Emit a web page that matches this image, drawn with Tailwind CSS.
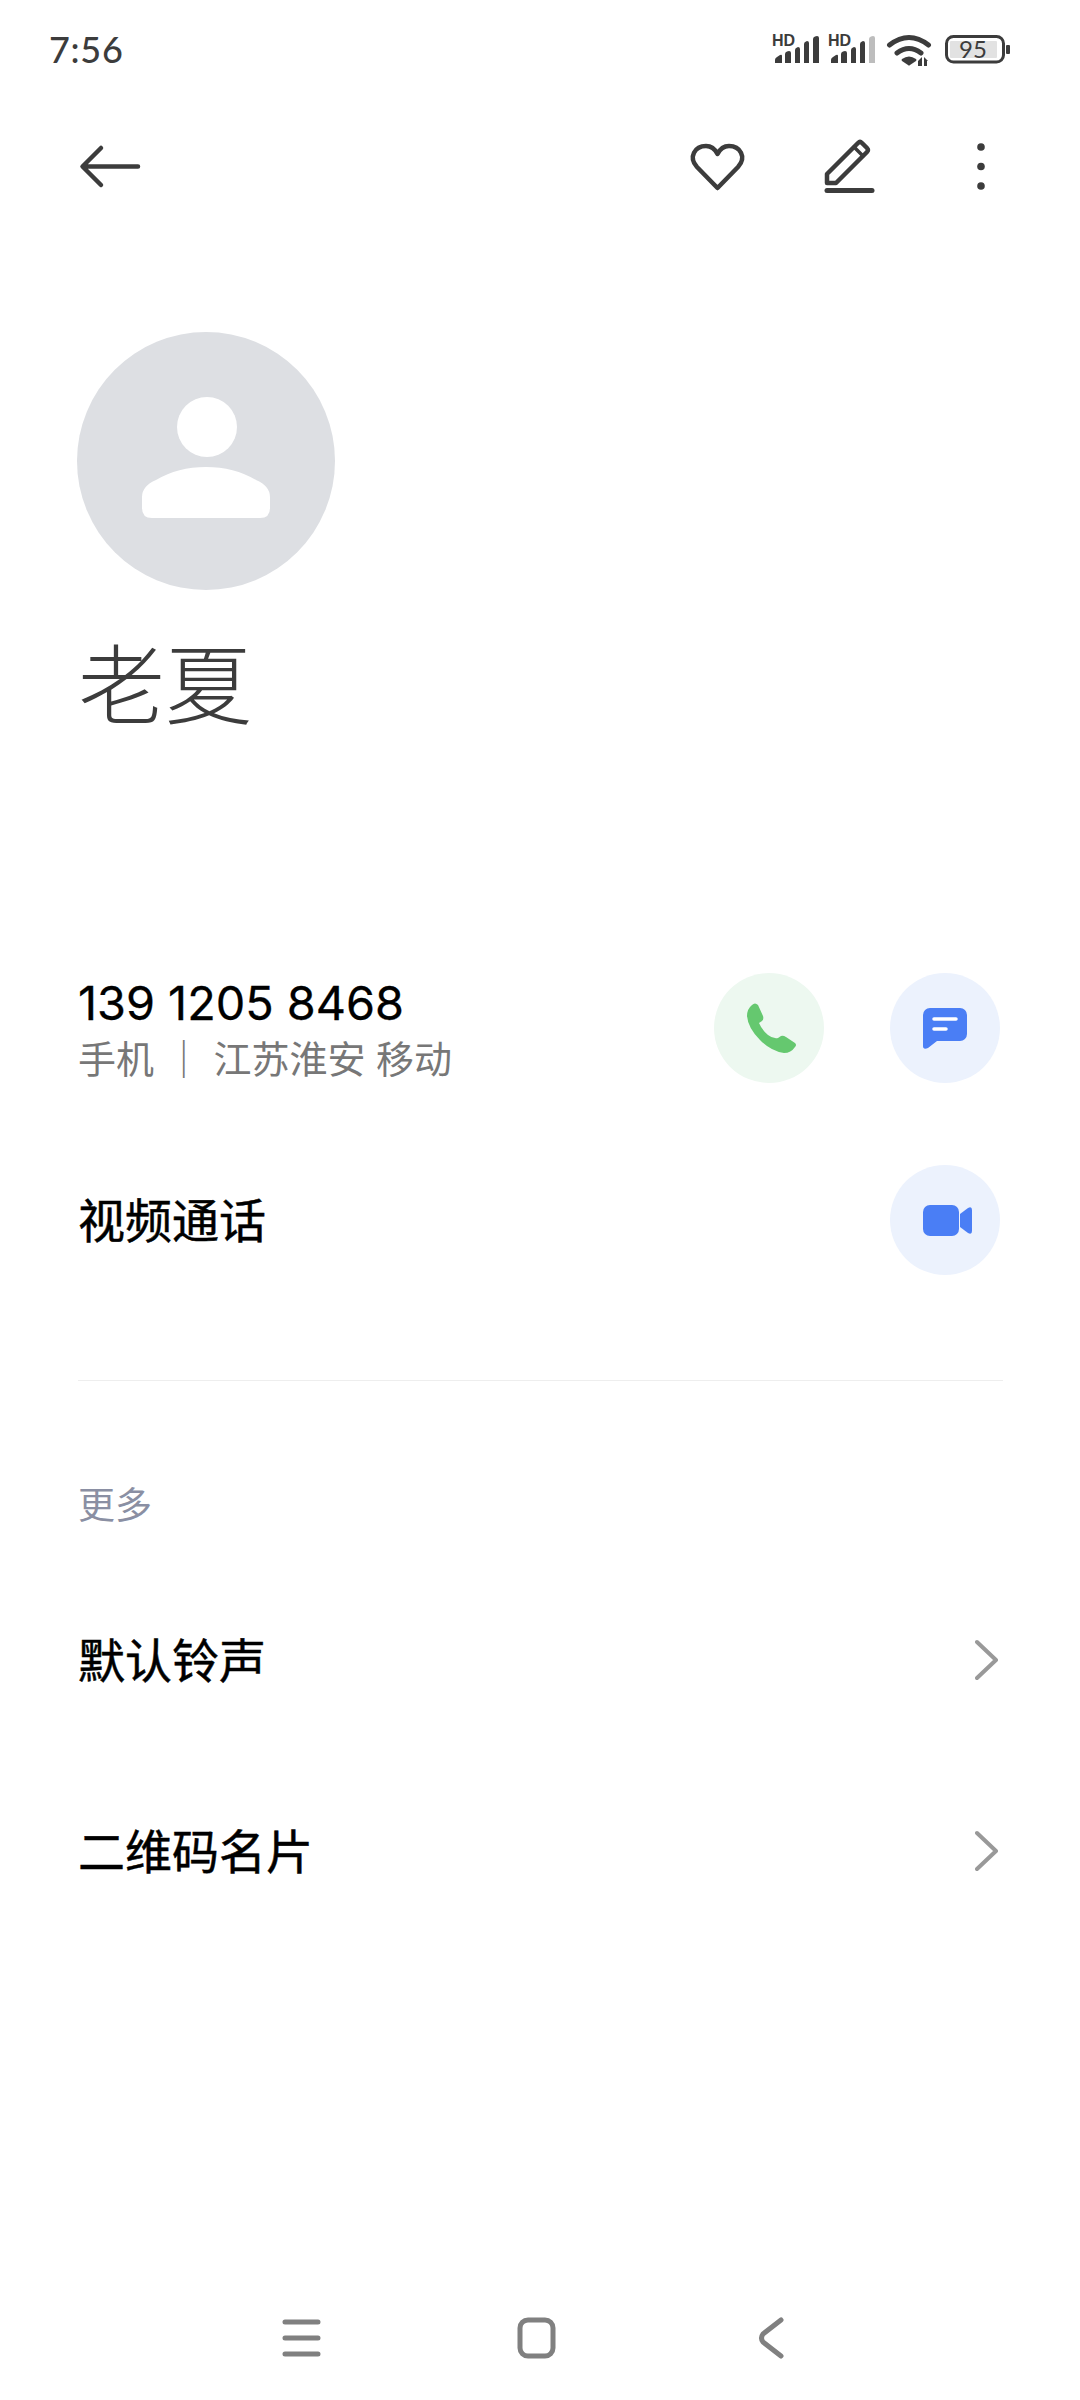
<!DOCTYPE html>
<html lang="zh-CN">
<head>
<meta charset="utf-8">
<script src="https://cdn.jsdelivr.net/npm/@tailwindcss/browser@4"></script>
</head>
<body class="bg-white">
<div class="w-[1080px] h-[2400px] bg-white flex flex-col font-['Inter','Noto_Sans_CJK_SC',sans-serif] text-black overflow-hidden">
  <!-- status bar -->
  <div class="h-[100px] flex items-center justify-between pl-[49px] pr-[70px] shrink-0">
    <span class="text-[36px] leading-none text-[#3c3c3c] font-['Lato',sans-serif] font-medium tracking-[0.7px] -translate-y-px">7:56</span>
    <svg class="w-[240px] h-[40px]" viewBox="770 30 240 40" fill="#3c3c3c">
      <text x="772" y="46" font-family="Liberation Sans" font-weight="700" font-size="16">HD</text>
      <path d="M775 63v-3q0-2 2-3l3-2q2-1 2 1v7zM785 63v-9q0-2 2-2.500l2-.5q2 0 2 2v10zM795 63v-13q0-2 2-2.500l1-.5q2 0 2 2v14zM804 63v-19q0-2 2-2.500l1-.5q2 0 2 2v20zM813 63v-24q0-2 2-2.500l2-.5q2 0 2 2v25z"/>
      <text x="828" y="46" font-family="Liberation Sans" font-weight="700" font-size="16">HD</text>
      <path d="M831 63v-3q0-2 2-3l3-2q2-1 2 1v7zM841 63v-9q0-2 2-2.500l2-.5q2 0 2 2v10zM851 63v-13q0-2 2-2.500l1-.5q2 0 2 2v14zM860 63v-19q0-2 2-2.500l1-.5q2 0 2 2v20z"/>
      <path d="M869 63v-24q0-2 2-2.500l2-.5q2 0 2 2v25z" fill="#bdbdbd"/>
      <g fill="none" stroke="#3c3c3c" stroke-width="5" stroke-linecap="round">
        <path d="M889.500 45q19.500-15 39 0"/>
        <path d="M897 53q12-9 24 0"/>
      </g>
      <path d="M902 59q7-5 14 0q1 1 0 2l-6 4q-1 1-2 0l-6-4q-1-1 0-2z"/>
      <path d="M918 61l4-4v9h-4zM924 57l4 4h-1v5h-3z"/>
      <rect x="946.500" y="36.500" width="57" height="25.500" rx="7" fill="none" stroke="#3c3c3c" stroke-width="3"/>
      <rect x="950" y="41" width="47" height="17" fill="#e2e2e2" rx="1"/>
      <text x="959" y="58" font-family="Lato" font-size="24" fill="#3c3c3c">95</text>
      <rect x="1006" y="45" width="4" height="9" rx="1"/>
    </svg>
  </div>
  <!-- toolbar -->
  <div class="h-[132px] flex items-center justify-between shrink-0 relative">
    <svg class="w-[1080px] h-[132px]" viewBox="0 100 1080 132" fill="none" stroke="#3c3c3c" stroke-width="4.500" stroke-linecap="round" stroke-linejoin="round">
      <path d="M138 166.500H83M101 148L82.500 166.500L101 185"/>
      <path d="M717.500 188L697 167C688 157 695 146 706 146C711 146 715 149 717.500 154C720 149 724 146 729 146C740 146 747 157 738 167Z"/>
      <path d="M827 183V174L858 143Q860 141 862 143L867 148Q869 150 867 152L836 183Z"/>
      <path d="M854 147L863 156" stroke-width="3.500"/>
      <path d="M827 190.500H872" stroke-width="5"/>
      <g fill="#3c3c3c" stroke="none"><circle cx="981" cy="147" r="3.800"/><circle cx="981" cy="166.500" r="3.800"/><circle cx="981" cy="186" r="3.800"/></g>
    </svg>
  </div>
  <!-- avatar -->
  <div class="pl-[77px] mt-[100px] shrink-0">
    <div class="w-[258px] h-[258px] rounded-full bg-[#dddfe3] flex items-center justify-center">
      <svg class="w-[258px] h-[258px]" viewBox="77 332 258 258" fill="#fff">
        <circle cx="207" cy="427" r="30"/>
        <path d="M142 497Q142 486 156 480Q178 467 206 467Q234 467 256 480Q270 486 270 497V508Q270 518 260 518H152Q142 518 142 508Z"/>
      </svg>
    </div>
  </div>
  <div class="pl-[78px] mt-[42px] h-[110px] shrink-0 text-[87px] leading-[110px] text-[#3c3c3c] font-extralight">老夏</div>
  <!-- phone -->
  <div class="mt-[231px] pl-[78px] pr-[80px] h-[110px] flex items-center justify-between shrink-0">
    <div class="flex flex-col">
      <span class="text-[46.800px] leading-[58px] h-[58px] [-webkit-text-stroke:0.3px_black]">139 1205 8468</span>
      <span class="text-[38px] leading-[50px] h-[50px] mt-[2px] -mb-[2px] text-[#777777] whitespace-pre">手机 ｜ 江苏淮安 移动</span>
    </div>
    <div class="flex gap-[66px]">
      <div class="w-[110px] h-[110px] rounded-full bg-[#edf8f0]">
        <svg class="w-[110px] h-[110px]" viewBox="714 973 110 110" fill="#65c86f"><path d="M752 1005Q755 1002 758 1005L763 1016Q764 1019 762 1021L759 1023Q762 1030 768 1035Q773 1039 778 1038L781 1036Q783 1035 786 1037L795 1043Q797 1045 795 1047Q791 1053 784 1053Q771 1051 760 1040Q748 1028 747 1016Q747 1009 752 1005Z"/></svg>
      </div>
      <div class="w-[110px] h-[110px] rounded-full bg-[#ecf2fd]">
        <svg class="w-[110px] h-[110px]" viewBox="890 973 110 110" fill="#4a7ef5"><path d="M930 1008H960a7 7 0 0 1 7 7V1034a7 7 0 0 1-7 7H937L928 1048Q923 1050 923 1046V1015a7 7 0 0 1 7-7Z"/><path d="M934 1019H956M934 1029H946" stroke="#fff" stroke-width="3.500" stroke-linecap="round"/></svg>
      </div>
    </div>
  </div>
  <!-- video -->
  <div class="mt-[82px] pl-[78px] pr-[80px] h-[110px] flex items-center justify-between shrink-0">
    <span class="text-[47px] leading-none [-webkit-text-stroke:0.5px_black]">视频通话</span>
    <div class="w-[110px] h-[110px] rounded-full bg-[#ecf2fd]">
      <svg class="w-[110px] h-[110px]" viewBox="890 1165 110 110" fill="#4a7ef5"><rect x="923" y="1205" width="36" height="31" rx="7"/><path d="M960 1214L968 1208Q972 1206 972 1210V1231Q972 1235 968 1233L960 1227Z"/></svg>
    </div>
  </div>
  <div class="mt-[105px] ml-[78px] w-[925px] h-[1px] bg-[#eeeeee] shrink-0"></div>
  <div class="mt-[100px] pl-[78px] h-[50px] text-[37px] leading-[50px] text-[#8a8fa3] shrink-0">更多</div>
  <!-- rows -->
  <div class="mt-[89px] pl-[78px] pr-[81px] h-[80px] flex items-center justify-between shrink-0">
    <span class="text-[47px] leading-none [-webkit-text-stroke:0.5px_black]">默认铃声</span>
    <svg class="w-[24px] h-[42px]" viewBox="0 0 24 42" fill="none" stroke="#999999" stroke-width="4" stroke-linecap="round" stroke-linejoin="round"><path d="M2 3L21 21L2 39"/></svg>
  </div>
  <div class="mt-[111px] pl-[78px] pr-[81px] h-[80px] flex items-center justify-between shrink-0">
    <span class="text-[47px] leading-none [-webkit-text-stroke:0.5px_black]">二维码名片</span>
    <svg class="w-[24px] h-[42px]" viewBox="0 0 24 42" fill="none" stroke="#999999" stroke-width="4" stroke-linecap="round" stroke-linejoin="round"><path d="M2 3L21 21L2 39"/></svg>
  </div>
  <!-- nav -->
  <div class="mt-auto h-[100px] shrink-0">
    <svg class="w-[1080px] h-[100px]" viewBox="0 2300 1080 100" fill="none" stroke="#808080" stroke-width="5" stroke-linecap="round" stroke-linejoin="round">
      <path d="M285 2322H318M285 2338H318M285 2354H318"/>
      <rect x="520" y="2320" width="33" height="36" rx="8"/>
      <path d="M781 2320L763 2334Q760 2338 763 2342L781 2356"/>
    </svg>
  </div>
</div>
</body>
</html>
